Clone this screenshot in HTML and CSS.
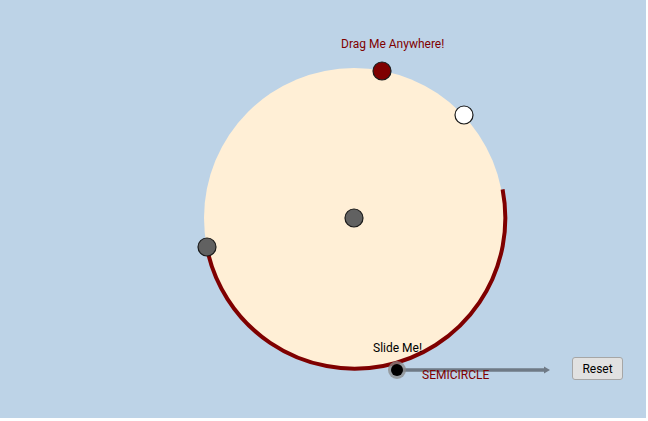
FILE: index.html
```html
<!DOCTYPE html>
<html>
<head>
<meta charset="utf-8">
<link rel="stylesheet" href="styles.css">
</head>
<body>
<div class="applet">
  <svg class="canvas" width="646" height="418" viewBox="0 0 646 418" xmlns="http://www.w3.org/2000/svg">
    <circle cx="354" cy="218" r="150" fill="#ffefd6"/>
    <path d="M 206.6 246.6 A 150 150 0 0 0 502.6 189.4" fill="none" stroke="#7f0000" stroke-width="4"/>
    <text class="lbl-red" x="341" y="48">Drag Me Anywhere!</text>
    <circle cx="382" cy="71" r="9" fill="#7f0000" stroke="#1a1a1a" stroke-width="1.2"/>
    <circle cx="464" cy="115" r="9" fill="#ffffff" stroke="#1a1a1a" stroke-width="1.2"/>
    <circle cx="354" cy="218" r="9" fill="#616161" stroke="#1a1a1a" stroke-width="1.2"/>
    <circle cx="207" cy="247" r="9" fill="#616161" stroke="#1a1a1a" stroke-width="1.2"/>
    <line x1="397" y1="370" x2="545" y2="370" stroke="#6f7a86" stroke-width="3.5"/>
    <path d="M 544 366.5 L 550 370 L 544 373.5 Z" fill="#6f7a86"/>
    <text class="lbl-black" x="373" y="352">Slide Me!</text>
    <circle cx="397" cy="370" r="9" fill="#8a8a8a" fill-opacity="0.75"/>
    <circle cx="397" cy="370" r="6" fill="#000000"/>
    <text class="lbl-red" x="422" y="379">SEMICIRCLE</text>
  </svg>
  <button class="reset">Reset</button>
</div>
</body>
</html>
```

FILE: styles.css
```css
html, body {
  margin: 0;
  padding: 0;
  background: #ffffff;
}
.applet {
  position: relative;
  width: 646px;
  height: 418px;
  background: #bdd3e7;
  font-family: Roboto, "Liberation Sans", sans-serif;
}
.canvas {
  display: block;
}
.lbl-red {
  font-family: Roboto, "Liberation Sans", sans-serif;
  font-size: 12px;
  fill: #7f0000;
}
.lbl-black {
  font-family: Roboto, "Liberation Sans", sans-serif;
  font-size: 12px;
  fill: #000000;
}
.reset {
  position: absolute;
  left: 572px;
  top: 357px;
  width: 51px;
  height: 23px;
  padding: 0;
  background: #e1e1e1;
  border: 1px solid #a6a6a6;
  border-radius: 3px;
  font-family: Roboto, "Liberation Sans", sans-serif;
  font-size: 12px;
  color: #000000;
}
```
